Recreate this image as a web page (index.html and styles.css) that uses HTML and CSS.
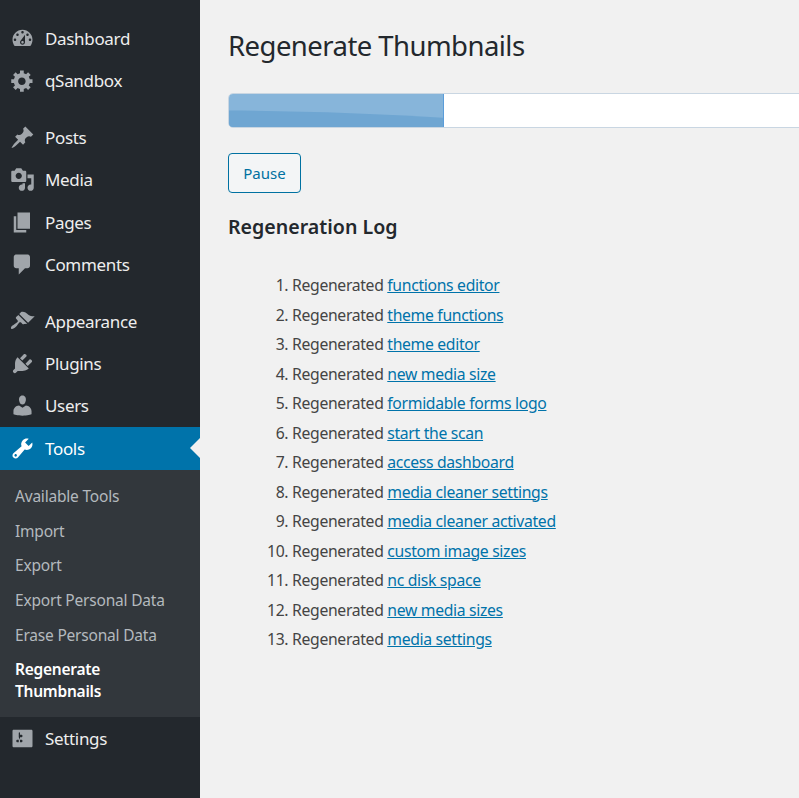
FILE: index.html
```html
<!DOCTYPE html>
<html lang="en">
<head>
<meta charset="utf-8">
<title>Regenerate Thumbnails</title>
<link rel="stylesheet" href="styles.css">
</head>
<body>
<div class="app">
  <nav class="sidebar">
    <ul class="menu">
      <li class="item"><svg class="icon" viewBox="0 0 20 20"><path d="M3.76 16h12.48c1.1-1.37 1.76-3.11 1.76-5 0-4.42-3.58-8-8-8s-8 3.58-8 8c0 1.89.66 3.63 1.76 5zM10 4c.55 0 1 .45 1 1s-.45 1-1 1-1-.45-1-1 .45-1 1-1zM6 6c.55 0 1 .45 1 1s-.45 1-1 1-1-.45-1-1 .45-1 1-1zm8 0c.55 0 1 .45 1 1s-.45 1-1 1-1-.45-1-1 .45-1 1-1zm-5.37 5.55L12 7v6c0 1.1-.9 2-2 2s-2-.9-2-2c0-.57.24-1.08.63-1.45zM4 10c.55 0 1 .45 1 1s-.45 1-1 1-1-.45-1-1 .45-1 1-1zm12 0c.55 0 1 .45 1 1s-.45 1-1 1-1-.45-1-1 .45-1 1-1zm-5 3c0-.55-.45-1-1-1s-1 .45-1 1 .45 1 1 1 1-.45 1-1z"/></svg><span>Dashboard</span></li>
      <li class="item"><svg class="icon" viewBox="0 0 20 20"><path d="M18 12h-2.18c-.17.7-.44 1.35-.81 1.93l1.54 1.54-2.1 2.1-1.54-1.54c-.58.36-1.23.63-1.91.79V19H8v-2.18c-.68-.16-1.33-.43-1.91-.79l-1.54 1.54-2.12-2.12 1.54-1.54c-.36-.58-.63-1.23-.79-1.91H1V9.03h2.17c.16-.7.44-1.35.8-1.94L2.43 5.55l2.1-2.1 1.54 1.54c.58-.37 1.24-.64 1.93-.81V2h3v2.18c.68.16 1.33.43 1.91.79l1.54-1.54 2.12 2.12-1.54 1.54c.36.59.64 1.24.8 1.94H18V12zm-8.5 1.5c1.66 0 3-1.34 3-3s-1.34-3-3-3-3 1.34-3 3 1.34 3 3 3z"/></svg><span>qSandbox</span></li>
    </ul>
    <ul class="menu">
      <li class="item"><svg class="icon" viewBox="0 0 20 20"><path d="M10.44 3.02l1.82-1.82 6.36 6.35-1.83 1.82c-1.05-.68-2.48-.57-3.41.36l-.75.75c-.92.93-1.04 2.35-.35 3.41l-1.83 1.82-2.41-2.41-2.8 2.79c-.42.42-3.38 2.71-3.8 2.29s1.86-3.39 2.28-3.81l2.79-2.79L4.1 9.36l1.83-1.82c1.05.69 2.48.57 3.4-.36l.75-.75c.93-.92 1.05-2.35.36-3.41z"/></svg><span>Posts</span></li>
      <li class="item"><svg class="icon" viewBox="0 0 20 20"><path d="M13 11V4c0-.55-.45-1-1-1h-1.67L9 1H5L3.67 3H2c-.55 0-1 .45-1 1v7c0 .55.45 1 1 1h10c.55 0 1-.45 1-1zM7 4.5c1.38 0 2.5 1.12 2.5 2.5S8.38 9.5 7 9.5 4.5 8.38 4.5 7 5.62 4.5 7 4.5zM14 6h5v10.5c0 1.38-1.12 2.5-2.5 2.5S14 17.88 14 16.5s1.12-2.5 2.5-2.5c.17 0 .34.02.5.05V9h-3V6zm-4 8.05V13h2v3.5c0 1.38-1.12 2.5-2.5 2.5S7 17.88 7 16.5 8.12 14 9.5 14c.17 0 .34.02.5.05z"/></svg><span>Media</span></li>
      <li class="item"><svg class="icon" viewBox="0 0 20 20"><path d="M6 15V2h10v13H6zm-1 1h8v2H3V5h2v11z"/></svg><span>Pages</span></li>
      <li class="item"><svg class="icon" viewBox="0 0 20 20"><path d="M5 2h9c1.1 0 2 .9 2 2v7c0 1.1-.9 2-2 2h-2l-5 5v-5H5c-1.1 0-2-.9-2-2V4c0-1.1.9-2 2-2z"/></svg><span>Comments</span></li>
    </ul>
    <ul class="menu">
      <li class="item"><svg class="icon" viewBox="0 0 20 20"><path d="M14.48 11.06L7.41 3.99l1.5-1.5c.5-.56 2.3-.47 3.51.32 1.21.8 1.43 1.28 2.91 2.1 1.18.64 2.45 1.26 4.45.85zm-.71.71L6.7 4.7 4.93 6.47c-.39.39-.39 1.02 0 1.41l1.06 1.06c.39.39.39 1.03 0 1.42-.6.6-1.43 1.11-2.21 1.69-.35.26-.7.53-1.01.84C1.43 13.23.28 15.13.99 15.84c.71.71 2.61-.44 3.95-1.78.31-.31.58-.66.84-1.01.58-.78 1.09-1.61 1.69-2.21.39-.39 1.02-.39 1.41 0l1.06 1.06c.39.39 1.02.39 1.41 0z"/></svg><span>Appearance</span></li>
      <li class="item"><svg class="icon" viewBox="0 0 20 20"><path d="M13.11 4.36L9.87 7.6 8 5.73l3.24-3.24c.35-.34 1.05-.2 1.56.32.52.51.66 1.21.31 1.55zm-8 1.77l.91-1.12 9.01 9.01-1.19.84c-.71.71-2.63 1.16-3.82 1.16H6.14L4.9 17.26c-.59.59-1.54.59-2.12 0-.59-.58-.59-1.53 0-2.12l1.24-1.24v-3.88c0-1.13.4-3.19 1.09-3.89zm7.26 3.97l3.24-3.24c.34-.35 1.04-.21 1.55.31.52.51.66 1.21.31 1.55l-3.24 3.25z"/></svg><span>Plugins</span></li>
      <li class="item"><svg class="icon" viewBox="0 0 20 20"><path d="M10 9.25c-2.27 0-2.73-3.44-2.73-3.44C7 4.02 7.82 2 9.97 2c2.16 0 2.98 2.02 2.71 3.81 0 0-.41 3.44-2.68 3.44zm0 2.57L12.72 10c2.39 0 4.52 2.33 4.52 4.53v2.49s-3.65 1.13-7.24 1.13c-3.65 0-7.24-1.13-7.24-1.13v-2.49c0-2.25 1.94-4.53 4.47-4.53z"/></svg><span>Users</span></li>
      <li class="item current"><svg class="icon" viewBox="0 0 20 20"><path d="M16.68 9.77c-1.34 1.34-3.3 1.67-4.95.99l-5.41 6.52c-.99.99-2.59.99-3.58 0s-.99-2.59 0-3.57l6.52-5.42c-.68-1.65-.35-3.61.99-4.95 1.28-1.28 3.12-1.62 4.72-1.06l-2.89 2.89 2.82 2.82 2.86-2.87c.53 1.58.18 3.39-1.08 4.65zM3.81 16.21c.4.39 1.04.39 1.43 0 .4-.4.4-1.04 0-1.43-.39-.4-1.03-.4-1.43 0-.39.39-.39 1.03 0 1.43z"/></svg><span>Tools</span></li>
      <li>
        <ul class="submenu">
          <li>Available Tools</li>
          <li>Import</li>
          <li>Export</li>
          <li>Export Personal Data</li>
          <li>Erase Personal Data</li>
          <li class="active">Regenerate Thumbnails</li>
        </ul>
      </li>
      <li class="item"><svg class="icon" viewBox="0 0 20 20"><path d="M18 16V4c0-.55-.45-1-1-1H3c-.55 0-1 .45-1 1v12c0 .55.45 1 1 1h14c.55 0 1-.45 1-1zM8 11h1c.55 0 1 .45 1 1s-.45 1-1 1H8v1.5c0 .28-.22.5-.5.5s-.5-.22-.5-.5V13H6c-.55 0-1-.45-1-1s.45-1 1-1h1V5.5c0-.28.22-.5.5-.5s.5.22.5.5V7h1c.55 0 1 .45 1 1s-.45 1-1 1h-1v5.5c0 .28-.22.5-.5.5s-.5-.22-.5-.5V9z"/></svg><span>Settings</span></li>
    </ul>
  </nav>
  <main class="content">
    <h1 class="title">Regenerate Thumbnails</h1>
    <div class="progress">
      <div class="progress-value">
        <svg class="progress-shine" viewBox="0 0 214 32" preserveAspectRatio="none"><path d="M0 16C70 16.5 150 19 214 23V32H0Z"/></svg>
      </div>
    </div>
    <button class="pause" type="button">Pause</button>
    <h2 class="log-title">Regeneration Log</h2>
    <ol class="log">
      <li>Regenerated <a href="#">functions editor</a></li>
      <li>Regenerated <a href="#">theme functions</a></li>
      <li>Regenerated <a href="#">theme editor</a></li>
      <li>Regenerated <a href="#">new media size</a></li>
      <li>Regenerated <a href="#">formidable forms logo</a></li>
      <li>Regenerated <a href="#">start the scan</a></li>
      <li>Regenerated <a href="#">access dashboard</a></li>
      <li>Regenerated <a href="#">media cleaner settings</a></li>
      <li>Regenerated <a href="#">media cleaner activated</a></li>
      <li>Regenerated <a href="#">custom image sizes</a></li>
      <li>Regenerated <a href="#">nc disk space</a></li>
      <li>Regenerated <a href="#">new media sizes</a></li>
      <li>Regenerated <a href="#">media settings</a></li>
    </ol>
  </main>
</div>
</body>
</html>
```
FILE: styles.css
```css
* { box-sizing: border-box; }
html, body { margin: 0; height: 100%; overflow: hidden; }
body { font-family: "Noto Sans", "Open Sans", sans-serif; background: #f1f1f1; color: #444; }
ul, ol { margin: 0; padding: 0; list-style: none; }

.app { display: flex; width: 799px; height: 798px; overflow: hidden; }

.sidebar { flex: 0 0 200px; background: #23282d; padding-top: 17px; }
.menu { margin-bottom: 14.3px; }
.item { display: flex; align-items: center; height: 42.4px; padding-left: 9.5px; font-size: 17px; letter-spacing: -0.33px; color: #eee; }
.item span { margin-left: 10.5px; }
.icon { width: 25px; height: 25px; fill: #a0a5aa; flex: none; }
.current { position: relative; background: #0073aa; color: #fff; }
.current .icon { fill: #fff; }
.current::after { content: ""; position: absolute; right: 0; top: 50%; margin-top: -10px; border: 10px solid transparent; border-right-color: #f1f1f1; border-left-width: 0; }

.submenu { background: #32373c; padding: 9.4px 0 9px; font-size: 15.5px; color: #b4b9be; }
.submenu li { padding: 6.3px 15px; line-height: 22px; letter-spacing: -0.2px; }
.submenu .active { color: #fff; font-weight: 600; letter-spacing: -0.25px; }

.content { flex: 1; min-width: 0; padding: 0 0 0 28px; overflow: hidden; }
.title { margin: 27px 0 0; font-size: 27.5px; line-height: 38px; font-weight: 400; letter-spacing: -0.55px; color: #23282d; }
.progress { width: 640px; height: 35px; margin-top: 28px; background: #fff; border: 1px solid #c9d6e2; border-radius: 5px; overflow: hidden; }
.progress-value { position: relative; width: 215px; height: 100%; background: #87b5da; border-right: 1px solid #5b9dd9; }
.progress-shine { display: block; width: 100%; height: 100%; fill: #6fa6d2; }

.pause { display: block; width: 73px; height: 40px; margin-top: 25px; padding: 0; border: 1px solid #0071a1; border-radius: 4px; background: #f3f5f6; color: #0071a1; font: 400 15px "Noto Sans", sans-serif; }

.log-title { margin: 20px 0 0; font-size: 19.6px; line-height: 28px; font-weight: 600; color: #23282d; }

.log { margin-top: 30px; padding-left: 64px; list-style: decimal; font-size: 15.75px; line-height: 29.5px; letter-spacing: -0.33px; }
.log a { color: #0073aa; text-decoration: underline; }
```
